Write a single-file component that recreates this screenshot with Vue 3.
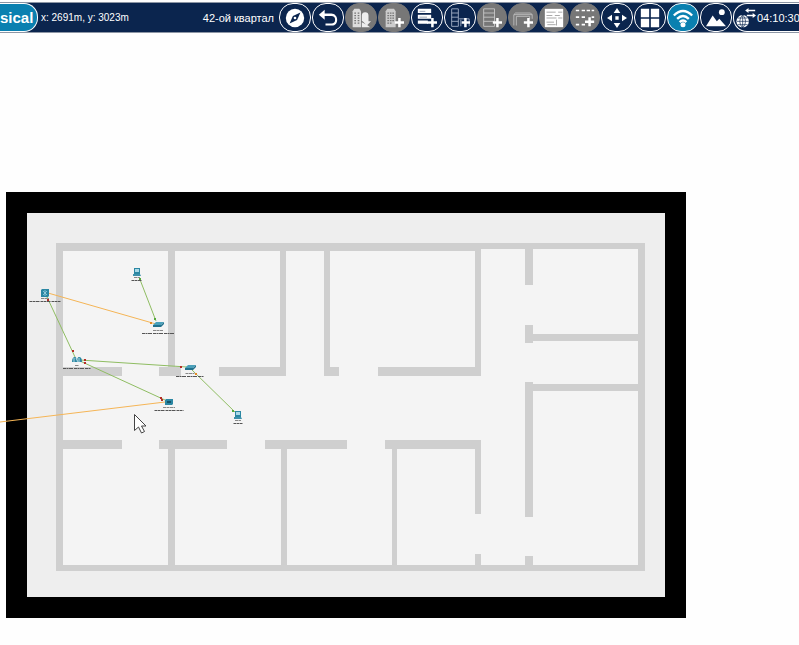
<script setup>
const tools = [
  { id: 'navigate', label: 'Navigation', kind: 'outlined' },
  { id: 'back', label: 'Back', kind: 'outlined' },
  { id: 'city', label: 'New city', kind: 'disabled wide' },
  { id: 'building', label: 'New building', kind: 'disabled wide' },
  { id: 'closet', label: 'New container', kind: 'outlined' },
  { id: 'wiring', label: 'New closet', kind: 'outlined' },
  { id: 'rack', label: 'New rack', kind: 'disabled' },
  { id: 'table', label: 'New table', kind: 'disabled' },
  { id: 'shelf', label: 'New shelf', kind: 'disabled' },
  { id: 'grid', label: 'Set grid', kind: 'disabled' },
  { id: 'move', label: 'Move object', kind: 'outlined' },
  { id: 'layout', label: 'Arrange', kind: 'outlined' },
  { id: 'wireless', label: 'Wireless range', kind: 'active' },
  { id: 'background', label: 'Set background', kind: 'outlined' },
]

// Each wall is [x, y, width, height]
const walls = [
  [56, 243, 425, 8], [481, 243, 164, 6], [56, 243, 7, 328], [56, 565, 589, 6], [638, 243, 7, 328],
  [168, 251, 7, 118], [280, 251, 6, 125], [324, 251, 6, 125], [475, 251, 6, 125],
  [63, 367, 59, 9], [159, 367, 22, 9], [219, 367, 67, 9], [324, 367, 15, 9], [378, 367, 103, 9],
  [63, 440, 59, 9], [159, 440, 68, 9], [265, 440, 82, 9], [385, 440, 96, 9],
  [168, 449, 7, 116], [281, 449, 6, 116], [392, 449, 5, 116],
  [475, 449, 6, 65], [475, 554, 6, 11],
  [525, 249, 8, 36], [525, 325, 8, 18], [525, 382, 8, 135], [525, 556, 8, 9],
  [533, 334, 105, 7], [533, 384, 105, 7],
]

const links = [
  { from: [48, 293], to: [156, 324], color: '#f5b556' },
  { from: [0, 422], to: [165, 402], color: '#f5b556' },
  { from: [47, 297], to: [75, 357], color: '#8fbd62' },
  { from: [139, 277], to: [156, 321], color: '#8fbd62' },
  { from: [80, 360], to: [187, 367], color: '#8fbd62' },
  { from: [80, 361], to: [165, 400], color: '#8fbd62' },
  { from: [192, 370], to: [236, 413], color: '#8fbd62' },
]

const ports = [
  [48, 300, '#b52c26'], [73, 351, '#b52c26'], [85, 360, '#b52c26'], [85, 363, '#b52c26'],
  [161, 398, '#b52c26'], [162, 400, '#b52c26'], [181, 367, '#b52c26'], [140, 279, '#55a83c'],
  [155, 319, '#55a83c'], [151, 323, '#e58a25'], [196, 374, '#e58a25'], [233, 411, '#55a83c'],
]

const devices = [
  { type: 'mls', x: 45, y: 293, name: 8, caption: 31 },
  { type: 'pc', x: 137, y: 272, name: 6, caption: 11 },
  { type: 'switch', x: 158, y: 325, name: 10, caption: 32 },
  { type: 'router', x: 77, y: 360, name: 4, caption: 28 },
  { type: 'switch', x: 190, y: 368, name: 9, caption: 28 },
  { type: 'server', x: 169, y: 402, name: 12, caption: 29 },
  { type: 'pc', x: 238, y: 415, name: 6, caption: 9 },
]
</script>

<template>
  <div class="page">
    <header class="toolbar">
      <button class="mode" type="button">sical</button>
      <span class="coords">x: 2691m, y: 3023m</span>
      <span class="place">42-ой квартал</span>
      <nav class="tools">
        <button v-for="tool in tools" :key="tool.id" type="button" class="tool" :class="tool.kind" :aria-label="tool.label">
          <svg viewBox="0 0 24 24" aria-hidden="true">
            <g v-if="tool.id === 'navigate'">
              <circle cx="12" cy="12" r="11" fill="#fff" />
              <path d="M18.500 5.500 14.500 14.500 5.500 18.500 9.500 9.500Z" fill="#0b254e" />
              <circle cx="12" cy="12" r="1.600" fill="#fff" />
            </g>
            <path v-else-if="tool.id === 'back'" d="M8 2 1 8l7 6v-4.500h8c3 0 4.500 1.500 4.500 4.500S19 18.500 16 18.500H9V21h7.500c4.500 0 6.500-3 6.500-7s-3-7.500-7-7.500H8Z" fill="#fff" />
            <g v-else-if="tool.id === 'city'">
              <path d="M2 4 4 1h6l2 3v19H2Z" fill="#ddd" />
              <path d="M4 6h2m2 0h2M4 9h2m2 0h2M4 12h2m2 0h2M4 15h2m2 0h2M4 18h2m2 0h2" stroke="#777" stroke-width="1.500" />
              <path d="M13 9q0-4 4-4t4 4v7h3l-5 5-5-5h-1Z" fill="#eee" />
              <path d="M13 17v6h10l-4-3Z" fill="#eee" />
            </g>
            <g v-else-if="tool.id === 'building'">
              <path d="M2 4 4 1h8l2 3v19H2Z" fill="#ccc" />
              <path d="M4 6h2m1 0h2m1 0h2M4 9h2m1 0h2m1 0h2M4 12h2m1 0h2m1 0h2M4 15h2m1 0h2m1 0h2M4 18h2m1 0h2" stroke="#777" stroke-width="1.500" />
              <path d="M17 12h3v4h4v3h-4v4h-3v-4h-4v-3h4Z" fill="#fff" />
            </g>
            <g v-else-if="tool.id === 'closet'">
              <path d="M1 1h16v5H1ZM1 8h16v5H1ZM1 15h12v4H1Z" fill="#fff" />
              <path d="M3 4h7M3 11h9" stroke="#8d98ab" />
              <path d="M17 12h3v4h4v3h-4v4h-3v-4h-5v-3h5Z" fill="#fff" />
            </g>
            <g v-else-if="tool.id === 'wiring'">
              <path d="M2 1h8v21H2ZM2 6h8M2 11h8M2 16h8M11 13h12v9M13 14v8" fill="none" stroke="#aebbd0" />
              <path d="M17 12h3v4h4v3h-4v4h-3v-4h-3v-3h3Z" fill="#fff" />
            </g>
            <g v-else-if="tool.id === 'rack'">
              <path d="M2 1h13v21H2ZM2 6h13M2 11h13M2 16h13" fill="none" stroke="#ccc" />
              <path d="M17 12h3v4h4v3h-4v4h-3v-4h-4v-3h4Z" fill="#fff" />
            </g>
            <g v-else-if="tool.id === 'table'">
              <path d="M1 21V8l2-2h18l2 2v5M4 21V10h16v3M1 8h22" fill="none" stroke="#c4c4c4" />
              <path d="M17 12h3v4h4v3h-4v4h-3v-4h-4v-3h4Z" fill="#fff" />
            </g>
            <g v-else-if="tool.id === 'shelf'">
              <path d="M1 1h22v22H1Z" fill="#fff" />
              <path d="M3 5h11M17 5h5M3 9h7M13 9h6M3 12h12M17 12h5M3 17h9M4 20h10M15 14v7" stroke="#999" />
            </g>
            <g v-else-if="tool.id === 'grid'">
              <path d="M1 3h4M8 3h4M14 3h4M20 3h3M1 11h4M8 11h4M20 11h3M1 20h4M8 20h4" stroke="#fff" stroke-width="2" />
              <path d="M16 11h3v4h4v3h-4v4h-3v-4h-4v-3h4Z" fill="#fff" />
            </g>
            <path v-else-if="tool.id === 'move'" d="m12 0 4 6H8ZM12 24l-4-6h8ZM0 12l6-4v8ZM24 12l-6 4V8ZM10 10h4v4h-4Z" fill="#fff" />
            <path v-else-if="tool.id === 'layout'" d="M1 1h10v10H1ZM13 1h10v10H13ZM1 13h10v10H1ZM13 13h10v10H13Z" fill="#fff" />
            <g v-else-if="tool.id === 'wireless'">
              <path d="M1 9Q12-2 23 9M5 13q7-7 14 0M8 17q4-4 8 0" fill="none" stroke="#fff" stroke-width="2.800" />
              <circle cx="12" cy="20" r="3" fill="#fff" />
            </g>
            <g v-else>
              <path d="m0 22 8-13 5 7 3-3 8 9Z" fill="#fff" />
              <circle cx="19" cy="5" r="3.500" fill="#fff" />
            </g>
          </svg>
        </button>
      </nav>
      <button class="clock" type="button">
        <svg viewBox="0 0 24 24" aria-hidden="true">
          <circle cx="8" cy="16" r="7.500" fill="#fff" />
          <path d="M1 16h15M2 12h12M2 20h12M8 8v16M8 8q-7 8 0 16M8 8q7 8 0 16" fill="none" stroke="#0b254e" stroke-width=".8" />
          <path d="M13 3h10M13 9h8" stroke="#fff" stroke-width="2" />
          <path d="m15 0-4 3 4 3ZM20 6l4 3-4 3Z" fill="#fff" />
        </svg>
        <span>04:10:30</span>
      </button>
    </header>

    <main class="workspace">
      <svg class="plan" viewBox="6 192 680 426" role="img" aria-label="Floor plan">
        <path d="M6 192h680v426H6Z" />
        <path d="M27 213h638v384H27Z" fill="#eee" />
        <path d="M56 243h589v328H56Z" fill="#f4f4f4" />
        <g fill="#cfcfcf" shape-rendering="crispEdges">
          <rect v-for="(w, i) in walls" :key="i" :x="w[0]" :y="w[1]" :width="w[2]" :height="w[3]" />
        </g>
        <line v-for="(l, i) in links" :key="i" :x1="l.from[0]" :y1="l.from[1]" :x2="l.to[0]" :y2="l.to[1]" :stroke="l.color" />
        <g v-for="(d, i) in devices" :key="i" :transform="`translate(${d.x} ${d.y})`">
          <g v-if="d.type === 'pc'">
            <path d="M-3-4h6v6h-6Z" fill="#2b87a3" />
            <path d="M-2-3h4v3h-4Z" fill="#a9d9e7" />
            <path d="M-4 2h7l1 2h-8Z" fill="#3d91aa" />
          </g>
          <g v-else-if="d.type === 'mls'">
            <path d="M-4-3l1-1h7v7l-1 1h-7Z" fill="#2b87a3" />
            <path d="M-2-2 2 2M2-2l-4 4M0-3v6" stroke="#a9d9e7" stroke-width=".7" />
          </g>
          <g v-else-if="d.type === 'switch'">
            <path d="M-5 0-2-3h8L3 0Z" fill="#4aa0ba" />
            <path d="M-5 0h8l3-3v2L3 2h-8Z" fill="#23718c" />
          </g>
          <g v-else-if="d.type === 'router'">
            <path d="M-5 2q0-5 3-5 2 0 2 5ZM0 2q0-5 2-5 3 0 3 5Z" fill="#2b87a3" />
            <path d="M-3 2v-4M2 2v-4M-1-2 1 2" stroke="#d5edf4" stroke-width=".8" />
          </g>
          <g v-else>
            <path d="M-4-2l1-1h7v5l-1 1h-7Z" fill="#2b87a3" />
            <path d="M-2-1h4v2h-4Z" fill="#14536a" />
          </g>
          <path :d="`M${-d.name / 2} 5.500h${d.name}`" stroke="#888" stroke-dasharray="3 .5" />
          <path :d="`M${-d.caption / 2} 8.500h${d.caption}`" stroke="#555" stroke-dasharray="3 .5 2 .5 4 1" />
        </g>
        <rect v-for="(p, i) in ports" :key="i" :x="p[0] - 1" :y="p[1] - 1" width="2" height="2" :fill="p[2]" />
        <path d="M134.500 414.500v16l4-3.500 3 6 3-1.500-3-5.500h4.500Z" fill="#fff" stroke="#444" />
      </svg>
    </main>
  </div>
</template>

<style>
body {
  margin: 0;
  background: #fefefe;
}
</style>

<style scoped>
.page {
  min-height: 100vh;
  overflow: hidden;
  font-family: "Liberation Sans", Arial, sans-serif;
  box-sizing: border-box;
}
.toolbar {
  display: flex;
  align-items: center;
  height: 29px;
  margin-top: 2px;
  border-top: 1px solid #8d96a5;
  border-bottom: 1px solid #8d96a5;
  background: #0b254e;
  color: #fff;
  white-space: nowrap;
}
button {
  box-sizing: border-box;
  flex: none;
  padding: 0;
  height: 29px;
  border: 1px solid #fff;
  background: #0b254e;
  color: #fff;
  font-family: inherit;
}
.mode {
  width: 38px;
  padding-right: 6px;
  border-left: 0;
  border-radius: 0 14px 14px 0;
  background: #0a80b0;
  font-size: 15px;
  font-weight: bold;
  text-align: right;
}
.coords {
  margin-left: 3px;
  font-size: 10px;
}
.place {
  margin-left: auto;
  margin-right: 5px;
  font-size: 11px;
}
.tools {
  display: flex;
  gap: 1px;
}
.tool {
  display: flex;
  align-items: center;
  justify-content: center;
  width: 32px;
  border-radius: 14px;
}
.tool svg {
  width: 20px;
  height: 20px;
}
.tool.disabled {
  width: 30px;
  border-color: #777;
  background: #777;
}
.tool.wide {
  width: 32px;
}
.tool.active {
  background: #0a80b0;
}
.clock {
  display: flex;
  align-items: center;
  gap: 1px;
  width: 66px;
  margin-left: 1px;
  padding-left: 2px;
  border-right: 0;
  border-radius: 14px 0 0 14px;
  font-size: 11px;
}
.clock svg {
  flex: none;
  width: 20px;
  height: 20px;
}
.workspace {
  padding: 159px 113px 27px 6px;
}
.plan {
  display: block;
  width: 100%;
  overflow: visible;
}
</style>
